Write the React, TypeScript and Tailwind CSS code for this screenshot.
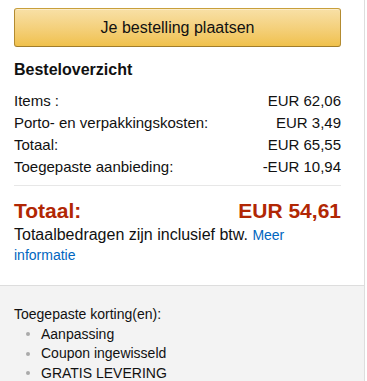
export default function App() {
  const rows = [
    { label: "Items :", value: "EUR 62,06" },
    { label: "Porto- en verpakkingskosten:", value: "EUR 3,49" },
    { label: "Totaal:", value: "EUR 65,55" },
    { label: "Toegepaste aanbieding:", value: "-EUR 10,94" },
  ];
  const discounts = ["Aanpassing", "Coupon ingewisseld", "GRATIS LEVERING"];

  return (
    <div className="h-[381px] w-[367px] overflow-hidden bg-white font-['Liberation_Sans',Arial,sans-serif] text-[#111]">
      <div className="w-[365px] border-r border-[#ddd]">
        <div className="pl-[14px] pr-[23px] pt-[8px] pb-[20px]">
          <button className="flex h-[39px] w-full items-center justify-center rounded-[3px] border border-t-[#c89f3a] border-x-[#b38b30] border-b-[#a17d2b] bg-gradient-to-b from-[#f8e0a6] to-[#f0c14b] text-[16px] text-[#111] shadow-[inset_0_1px_0_rgba(255,255,255,0.4)]">
            Je bestelling plaatsen
          </button>

          <h2 className="mt-[11px] text-[16px] leading-[24px] font-bold">Besteloverzicht</h2>

          <div className="mt-[8px]">
            {rows.map((r) => (
              <div key={r.label} className="flex justify-between text-[15px] leading-[22px]">
                <span>{r.label}</span>
                <span>{r.value}</span>
              </div>
            ))}
          </div>

          <div className="mt-[7px] h-px bg-[#e7e7e7]" />

          <div className="mt-[12px] flex justify-between text-[21px] leading-[26px] font-bold text-[#b12704]">
            <span>Totaal:</span>
            <span>EUR 54,61</span>
          </div>

          <p className="mt-[1px] text-[16px] leading-[20px]">
            Totaalbedragen zijn inclusief btw.{" "}
            <a href="#" className="text-[14px] leading-[20px] text-[#0066c0]">
              Meer informatie
            </a>
          </p>
        </div>

        <div className="border-t border-[#ddd] bg-[#f3f3f3] pl-[14px] pt-[19px] pb-[10px] text-[14px] leading-[19.5px]">
          <div>Toegepaste korting(en):</div>
          <ul>
            {discounts.map((d) => (
              <li key={d} className="flex items-center">
                <span className="ml-[12px] mr-[11px] h-[4px] w-[4px] rounded-full bg-[#aaa]" />
                <span>{d}</span>
              </li>
            ))}
          </ul>
        </div>
      </div>
    </div>
  );
}
